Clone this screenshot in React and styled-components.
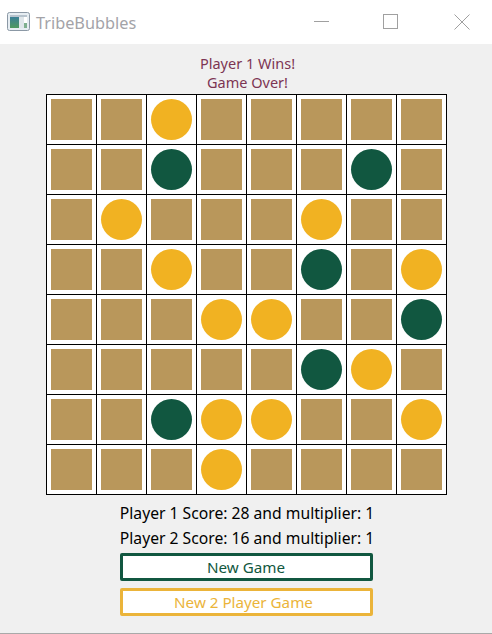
import React from 'react'
import styled, { createGlobalStyle } from 'styled-components'

const GlobalStyle = createGlobalStyle`
    html, body {
        margin: 0;
        padding: 0;
        background: #f0f0f0;
    }
    * {
        box-sizing: border-box;
    }
`

const Window = styled.div`
    width: 492px;
    height: 634px;
    display: flex;
    flex-direction: column;
    overflow: hidden;
    background: #f0f0f0;
    border-bottom: 1px solid #a9a9a9;
    font-family: 'Noto Sans', 'Open Sans', sans-serif;
`

const TitleBar = styled.div`
    height: 44px;
    flex: none;
    display: flex;
    align-items: center;
    background: #fff;
    padding-left: 7px;
`

const AppTitle = styled.span`
    margin-left: 5px;
    margin-top: 1px;
    font-size: 16.3px;
    color: #a3a3a8;
    flex: 1;
`

const WinButton = styled.div`
    width: 60px;
    height: 44px;
    margin-left: ${(p) => p.$gap}px;
    display: flex;
    align-items: center;
    justify-content: center;
`

const Content = styled.div`
    width: 492px;
    padding-left: 46px;
    display: flex;
    flex-direction: column;
`

const Status = styled.div`
    width: 401px;
    height: 50px;
    padding-top: 10px;
    padding-left: 2px;
    text-align: center;
    font-size: 14.5px;
    line-height: 19px;
    color: #7d3553;
`

const Board = styled.div`
    display: grid;
    grid-template-columns: repeat(8, 50px);
    grid-auto-rows: 50px;
    width: 401px;
    background: #fff;
    border-right: 1px solid #000;
    border-bottom: 1px solid #000;
`

const Cell = styled.div`
    display: flex;
    align-items: center;
    justify-content: center;
    border-left: 1px solid #000;
    border-top: 1px solid #000;
`

const Tile = styled.div`
    width: 41px;
    height: 41px;
    background: #b9975b;
`

const Bubble = styled.div`
    width: 41px;
    height: 41px;
    border-radius: 50%;
    background: ${(p) => (p.$kind === 'g' ? '#115740' : '#f1b222')};
`

const Footer = styled.div`
    width: 328px;
    margin-left: 36px;
    padding-top: 8px;
    display: flex;
    flex-direction: column;
    align-items: center;
`

const Score = styled.div`
    width: 253px;
    height: 25px;
    padding-left: 2px;
    font-size: 15.7px;
    line-height: 20px;
    display: flex;
    justify-content: center;
    color: #000;
    white-space: nowrap;
`

const Action = styled.div`
    width: 253px;
    height: 28px;
    margin-bottom: 7px;
    padding-right: ${(p) => p.$nudge || 0}px;
    background: #fff;
    border: 3px solid ${(p) => p.$color};
    border-radius: 2px;
    color: ${(p) => p.$color};
    font-size: 15.2px;
    line-height: 22px;
    text-align: center;
`

const rows = [
    '..y.....',
    '..g...g.',
    '.y...y..',
    '..y..g.y',
    '...yy..g',
    '.....gy.',
    '..gyy..y',
    '...y....',
]

const AppIcon = () => (
    <svg width="24" height="20" viewBox="0 0 24 20">
        <defs>
            <linearGradient id="app-icon-fill" x1="0" y1="0" x2="0" y2="1">
                <stop offset="0" stopColor="#3a7f96" />
                <stop offset="1" stopColor="#4f9a5f" />
            </linearGradient>
        </defs>
        <rect x="0.5" y="0.5" width="22" height="18" rx="2" fill="#e6edf2" stroke="#8b98a5" />
        <rect x="3" y="5" width="9" height="11" fill="url(#app-icon-fill)" />
        <rect x="3" y="3" width="17" height="2" fill="#b7c3cd" />
        <rect x="12" y="5" width="8" height="11" fill="#dfe6ea" />
        <rect x="17" y="5" width="3" height="6" fill="#fff" />
        <rect x="17" y="11" width="3" height="5" fill="#7fb08f" />
    </svg>
)

const App = () => (
    <>
        <GlobalStyle />
        <Window>
            <TitleBar>
                <AppIcon />
                <AppTitle>TribeBubbles</AppTitle>
                <WinButton $gap={0}>
                    <svg width="16" height="16" viewBox="0 0 16 16">
                        <path d="M0 7.5H15" stroke="#a0a0a0" fill="none" />
                    </svg>
                </WinButton>
                <WinButton $gap={9}>
                    <svg width="16" height="16" viewBox="0 0 16 16">
                        <rect x="0.5" y="0.5" width="14" height="14" stroke="#a0a0a0" fill="none" />
                    </svg>
                </WinButton>
                <WinButton $gap={11}>
                    <svg width="16" height="16" viewBox="0 0 16 16">
                        <path d="M0.5 0.5L15.5 15.5M15.5 0.5L0.5 15.5" stroke="#a0a0a0" fill="none" />
                    </svg>
                </WinButton>
            </TitleBar>
            <Content>
                <Status>
                    Player 1 Wins!
                    <br />
                    Game Over!
                </Status>
                <Board>
                    {rows.map((row, r) =>
                        row.split('').map((c, i) => (
                            <Cell key={`${r}-${i}`}>
                                {c === '.' ? <Tile /> : <Bubble $kind={c} />}
                            </Cell>
                        ))
                    )}
                </Board>
                <Footer>
                    <Score>Player 1 Score: 28 and multiplier: 1</Score>
                    <Score>Player 2 Score: 16 and multiplier: 1</Score>
                    <Action $color="#115740">New Game</Action>
                    <Action $color="#ebb43a" $nudge={5}>New 2 Player Game</Action>
                </Footer>
            </Content>
        </Window>
    </>
)

export default App
